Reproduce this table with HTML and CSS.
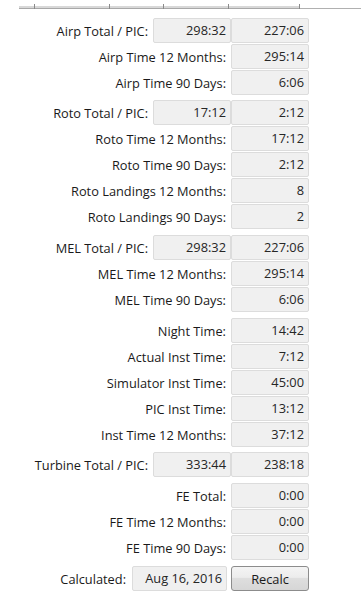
FILE: index.html
```html
<!DOCTYPE html>
<html>
<head>
<meta charset="utf-8">
<link rel="stylesheet" href="styles.css">
</head>
<body>
<div class="topbar">
  <div class="track">
    <span class="seg s1"></span>
    <span class="seg s2"></span>
    <span class="seg s3"></span>
    <span class="seg s4"></span>
    <span class="seg s5"></span>
  </div>
  <div class="tail"></div>
</div>
<div class="panel">
  <div class="group">
    <div class="row"><span class="label">Airp Total / PIC:</span><span class="box">298:32</span><span class="box">227:06</span></div>
    <div class="row"><span class="label">Airp Time 12 Months:</span><span class="box">295:14</span></div>
    <div class="row"><span class="label">Airp Time 90 Days:</span><span class="box">6:06</span></div>
  </div>
  <div class="group g4">
    <div class="row"><span class="label">Roto Total / PIC:</span><span class="box">17:12</span><span class="box">2:12</span></div>
    <div class="row"><span class="label">Roto Time 12 Months:</span><span class="box">17:12</span></div>
    <div class="row"><span class="label">Roto Time 90 Days:</span><span class="box">2:12</span></div>
    <div class="row"><span class="label">Roto Landings 12 Months:</span><span class="box">8</span></div>
    <div class="row"><span class="label">Roto Landings 90 Days:</span><span class="box">2</span></div>
  </div>
  <div class="group g5">
    <div class="row"><span class="label">MEL Total / PIC:</span><span class="box">298:32</span><span class="box">227:06</span></div>
    <div class="row"><span class="label">MEL Time 12 Months:</span><span class="box">295:14</span></div>
    <div class="row"><span class="label">MEL Time 90 Days:</span><span class="box">6:06</span></div>
  </div>
  <div class="group g5">
    <div class="row"><span class="label">Night Time:</span><span class="box">14:42</span></div>
    <div class="row"><span class="label">Actual Inst Time:</span><span class="box">7:12</span></div>
    <div class="row"><span class="label">Simulator Inst Time:</span><span class="box">45:00</span></div>
    <div class="row"><span class="label">PIC Inst Time:</span><span class="box">13:12</span></div>
    <div class="row"><span class="label">Inst Time 12 Months:</span><span class="box">37:12</span></div>
  </div>
  <div class="group g4">
    <div class="row"><span class="label">Turbine Total / PIC:</span><span class="box">333:44</span><span class="box">238:18</span></div>
  </div>
  <div class="group g5">
    <div class="row"><span class="label">FE Total:</span><span class="box">0:00</span></div>
    <div class="row"><span class="label">FE Time 12 Months:</span><span class="box">0:00</span></div>
    <div class="row"><span class="label">FE Time 90 Days:</span><span class="box">0:00</span></div>
  </div>
  <div class="group g5">
    <div class="row"><span class="label lcalc">Calculated:</span><span class="box date">Aug 16, 2016</span><button class="btn">Recalc</button></div>
  </div>
</div>
</body>
</html>
```

FILE: styles.css
```css
html, body {
  margin: 0;
  padding: 0;
  background: #ffffff;
}
body {
  font-family: "Open Sans", "Noto Sans", sans-serif;
  font-size: 12.8px;
  color: #1a1a1a;
  width: 361px;
  height: 596px;
  overflow: hidden;
}
.topbar {
  display: flex;
  align-items: flex-end;
  height: 9px;
  margin-bottom: 9px;
}
.track {
  display: flex;
  margin-left: 19px;
  height: 5px;
  align-items: flex-end;
}
.seg {
  height: 5px;
  box-sizing: border-box;
  border-right: 1px solid #8a8a8a;
  background: linear-gradient(to bottom, transparent 0, transparent 2px, #d8d8d8 2px, #d8d8d8 4px, #a8a8a8 4px);
}
.s1 { width: 16px; }
.s2 { width: 75px; }
.s3 { width: 54px; }
.s4 { width: 65px; }
.s5 { width: 71px; }
.tail {
  flex: 1;
  height: 1px;
  background: #b0b0b0;
}
.panel {
  width: 309px;
  display: flex;
  flex-direction: column;
}
.group {
  display: flex;
  flex-direction: column;
  gap: 1px;
}
.group.g4 { margin-top: 5px; }
.group.g5 { margin-top: 6px; }
.row {
  display: flex;
  justify-content: flex-end;
  align-items: center;
  height: 25px;
}
.label {
  margin-right: 5px;
  white-space: nowrap;
  color: #1a1a1a;
}
.lcalc {
  margin-right: 6px;
}
.box {
  box-sizing: border-box;
  width: 78px;
  height: 25px;
  line-height: 23px;
  border: 1px solid #dcdcdc;
  border-radius: 2px;
  background: #f0f0f0;
  text-align: right;
  padding-right: 4px;
  color: #262626;
  white-space: nowrap;
}
.box.date {
  width: 95px;
  margin-right: 4px;
}
.btn {
  box-sizing: border-box;
  width: 78px;
  height: 25px;
  margin: 0;
  padding: 0;
  font-family: inherit;
  font-size: 12.8px;
  color: #1a1a1a;
  border: 1px solid #8c8c8c;
  border-radius: 3px;
  background: linear-gradient(to bottom, #f4f4f4 0%, #ececec 45%, #dedede 50%, #d6d6d6 100%);
}
```
